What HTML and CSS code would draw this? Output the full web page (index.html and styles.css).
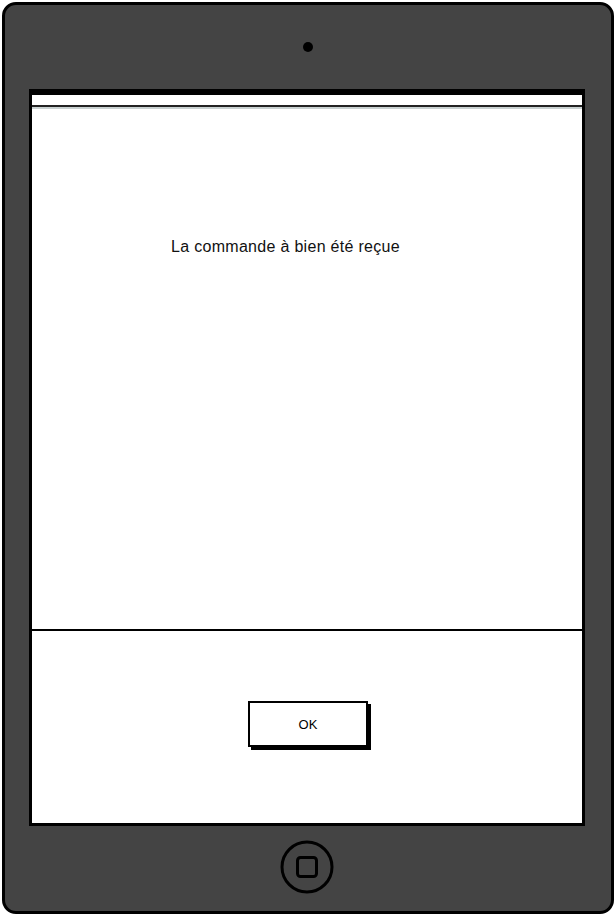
FILE: index.html
```html
<!DOCTYPE html>
<html lang="fr">
<head>
    <meta charset="UTF-8">
    <meta name="viewport" content="width=device-width, initial-scale=1.0">
    <title>Commande</title>
    <link rel="stylesheet" href="styles.css">
</head>
<body>
    <div class="tablette">
        <div class="haut">
            <div class="camera"></div>
        </div>

        <div class="ecran">
            <div class="barre-statut"></div>

            <section class="contenu">
                <p class="message">La commande à bien été reçue</p>
            </section>

            <footer class="pied">
                <button class="btn-ok">OK</button>
            </footer>
        </div>

        <div class="bas">
            <svg class="bouton-home" width="56" height="56" viewBox="0 0 56 56">
                <circle cx="28" cy="28" r="25" fill="none" stroke="#000" stroke-width="3"/>
                <rect x="18.5" y="18.5" width="19" height="19" rx="3" fill="none" stroke="#000" stroke-width="3"/>
            </svg>
        </div>
    </div>
</body>
</html>
```

FILE: styles.css
```css
body {
    margin: 0;
    padding: 0;
    background-color: #fff;
    font-family: "Liberation Sans", Arial, sans-serif;
}

.tablette {
    box-sizing: border-box;
    width: 612px;
    height: 912px;
    margin: 2px;
    border: 3px solid #000;
    border-radius: 14px;
    background-color: #444;
    padding: 0 26px 0 24px;
    display: grid;
    grid-template-rows: 84px 737px 1fr;
}

.haut {
    display: flex;
    justify-content: center;
    align-items: center;
}

.camera {
    width: 10px;
    height: 10px;
    border-radius: 50%;
    background-color: #000;
    margin-left: 2px;
}

.ecran {
    box-sizing: border-box;
    border: 3px solid #000;
    background-color: #fff;
    display: flex;
    flex-direction: column;
}

.barre-statut {
    height: 10px;
    border-top: 3px solid #000;
    border-bottom: 2px solid #222;
    box-shadow: 0 2px 0 #c9d1d1;
}

.contenu {
    flex: 1;
    padding: 130px 0 0 139px;
}

.message {
    margin: 0;
    font-size: 16px;
    line-height: 20px;
    letter-spacing: 0.3px;
    color: #111;
}

.pied {
    height: 194px;
    border-top: 2px solid #000;
    display: flex;
    justify-content: center;
    align-items: flex-start;
    padding-top: 70px;
    box-sizing: border-box;
}

.btn-ok {
    width: 120px;
    height: 46px;
    background: #fff;
    border: 2px solid #000;
    box-shadow: 3px 3px 0 #000;
    font-family: "Liberation Sans", Arial, sans-serif;
    font-size: 13px;
    color: #000;
    margin-left: 2px;
}

.bas {
    display: flex;
    justify-content: center;
    padding-top: 13px;
}
```
